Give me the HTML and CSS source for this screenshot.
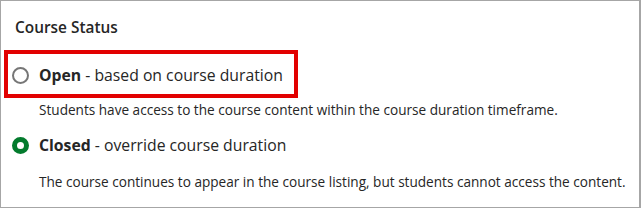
FILE: index.html
```html
<!DOCTYPE html>
<html lang="en">
<head>
    <meta charset="UTF-8">
    <title>Course Status</title>
    <link rel="stylesheet" href="styles.css">
</head>
<body>
    <div class="status-panel">
        <h3 class="status-title">Course Status</h3>

        <label class="status-option highlight">
            <span class="radio"></span>
            <span><b>Open</b> - based on course duration</span>
        </label>
        <p class="status-desc">Students have access to the course content within the course duration timeframe.</p>

        <label class="status-option">
            <span class="radio checked"></span>
            <span><b>Closed</b> - override course duration</span>
        </label>
        <p class="status-desc last">The course continues to appear in the course listing, but students cannot access the content.</p>
    </div>
</body>
</html>
```

FILE: styles.css
```css
* {
    margin: 0px;
    padding: 0px;
    box-sizing: border-box;
}

body {
    font-family: "Open Sans", "Liberation Sans", sans-serif;
    color: #262626;
    background-color: #ffffff;
}

.status-panel {
    width: 641px;
    height: 208px;
    border: #a6a6a6 solid 1px;
    border-right-width: 2px;
    padding-top: 16px;
    overflow: hidden;
}

.status-title {
    font-size: 15.4px;
    font-weight: 600;
    line-height: 22px;
    padding-left: 14px;
    margin-bottom: 15px;
}

.status-option {
    display: flex;
    align-items: center;
    gap: 10px;
    width: 286px;
    height: 40px;
    margin-left: 7px;
    padding-left: 4px;
    padding-top: 2px;
    font-size: 15.75px;
}

/* 红框标注 */
.status-option.highlight {
    outline: 4px solid #e20000;
}

.status-option b {
    font-weight: 700;
}

.radio {
    width: 17px;
    height: 17px;
    border-radius: 50%;
    border: #767676 solid 2px;
    flex-shrink: 0;
}

.radio.checked {
    border: #037b2d solid 5px;
}

.status-desc {
    font-size: 13.6px;
    line-height: 20px;
    padding-left: 38px;
    margin: 6px 0px 4px 0px;
}

.status-desc.last {
    margin-top: 8px;
}
```
